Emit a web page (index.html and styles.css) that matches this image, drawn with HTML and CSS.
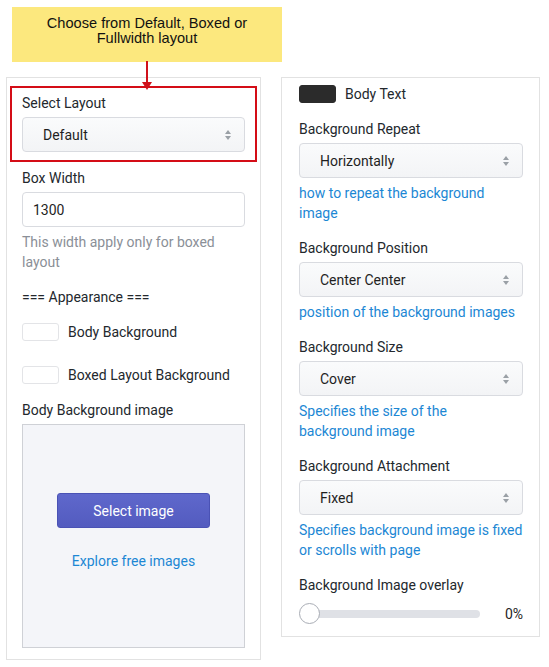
FILE: index.html
```html
<!DOCTYPE html>
<html lang="en">
<head>
<meta charset="utf-8">
<title>Layout settings</title>
<link rel="stylesheet" href="styles.css">
</head>
<body>
<div class="page">
  <div class="callout">Choose from Default, Boxed or<br>Fullwidth layout</div>
  <div class="arrow" aria-hidden="true">
    <svg width="12" height="30" viewBox="0 0 12 30"><rect x="5" y="0" width="2" height="22" fill="#d0111b"/><polygon points="1,21 11,21 6,29" fill="#d0111b"/></svg>
  </div>
  <div class="columns">
    <section class="panel panel-left">
      <div class="highlight">
        <div class="label">Select Layout</div>
        <div class="select"><span>Default</span><svg class="updown" width="8" height="12" viewBox="0 0 8 12"><polygon points="4,1 7,5 1,5" fill="#9aa0a6"/><polygon points="1,7 7,7 4,11" fill="#9aa0a6"/></svg></div>
      </div>
      <div class="label mt6">Box Width</div>
      <div class="input">1300</div>
      <div class="help gray">This width apply only for boxed layout</div>
      <div class="label mt15">=== Appearance ===</div>
      <div class="color-row mt15"><span class="swatch"></span><span>Body Background</span></div>
      <div class="color-row mt23"><span class="swatch"></span><span>Boxed Layout Background</span></div>
      <div class="label mt15">Body Background image</div>
      <div class="image-box">
        <button class="btn" type="button">Select image</button>
        <a class="explore" href="#">Explore free images</a>
      </div>
    </section>
    <section class="panel panel-right">
      <div class="color-row"><span class="swatch dark"></span><span>Body Text</span></div>
      <div class="label mt15">Background Repeat</div>
      <div class="select"><span>Horizontally</span><svg class="updown" width="8" height="12" viewBox="0 0 8 12"><polygon points="4,1 7,5 1,5" fill="#9aa0a6"/><polygon points="1,7 7,7 4,11" fill="#9aa0a6"/></svg></div>
      <div class="help blue">how to repeat the background image</div>
      <div class="label mt15">Background Position</div>
      <div class="select"><span>Center Center</span><svg class="updown" width="8" height="12" viewBox="0 0 8 12"><polygon points="4,1 7,5 1,5" fill="#9aa0a6"/><polygon points="1,7 7,7 4,11" fill="#9aa0a6"/></svg></div>
      <div class="help blue">position of the background images</div>
      <div class="label mt15">Background Size</div>
      <div class="select"><span>Cover</span><svg class="updown" width="8" height="12" viewBox="0 0 8 12"><polygon points="4,1 7,5 1,5" fill="#9aa0a6"/><polygon points="1,7 7,7 4,11" fill="#9aa0a6"/></svg></div>
      <div class="help blue">Specifies the size of the<br>background image</div>
      <div class="label mt15">Background Attachment</div>
      <div class="select"><span>Fixed</span><svg class="updown" width="8" height="12" viewBox="0 0 8 12"><polygon points="4,1 7,5 1,5" fill="#9aa0a6"/><polygon points="1,7 7,7 4,11" fill="#9aa0a6"/></svg></div>
      <div class="help blue">Specifies background image is fixed or scrolls with page</div>
      <div class="label mt15">Background Image overlay</div>
      <div class="slider-row">
        <div class="track"><span class="thumb"></span></div>
        <span class="value">0%</span>
      </div>
    </section>
  </div>
</div>
</body>
</html>
```

FILE: styles.css
```css
* { box-sizing: border-box; }
html, body { margin: 0; padding: 0; background: #fff; }
body {
  font-family: Roboto, "Noto Sans", Arial, sans-serif;
  font-size: 14px;
  line-height: 20px;
  color: #23282d;
}
.page {
  position: relative;
  padding: 7px 0 0 6px;
  width: 549px;
  height: 667px;
}
.callout {
  margin-left: 6px;
  width: 270px;
  height: 55px;
  background: #fce87e;
  font-family: "Liberation Sans", Arial, sans-serif;
  font-size: 14.6px;
  line-height: 15px;
  color: #111;
  text-align: center;
  padding-top: 9px;
}
.arrow {
  position: absolute;
  left: 141px;
  top: 61px;
  z-index: 2;
  line-height: 0;
}
.columns {
  display: flex;
  align-items: flex-start;
  gap: 20px;
  margin-top: 15px;
}
.panel {
  border: 1px solid #e2e2e2;
  background: #fff;
}
.panel-left {
  width: 255px;
  padding: 8px 15px 11px 15px;
}
.panel-right {
  width: 259px;
  padding: 6px 16px 12px 17px;
}
.highlight {
  margin: 0 -12px;
  border: 2px solid #d40d17;
  padding: 5px 10px 8px 10px;
}
.label { height: 20px; }
.mt6 { margin-top: 6px; }
.mt15 { margin-top: 15px; }
.mt23 { margin-top: 23px; }
.select {
  margin-top: 4px;
  height: 35px;
  border: 1px solid #d9dbe0;
  border-radius: 4px;
  background: linear-gradient(#fafbfc, #f3f4f6);
  display: flex;
  align-items: center;
  justify-content: space-between;
  padding: 0 12px 0 20px;
  color: #1f1f1f;
}
.updown { display: block; }
.input {
  margin-top: 4px;
  height: 35px;
  border: 1px solid #d9dbe0;
  border-radius: 4px;
  background: #fff;
  display: flex;
  align-items: center;
  padding: 0 10px;
  color: #1f1f1f;
}
.help { margin-top: 5px; }
.gray { color: #8a8f97; }
.blue { color: #1c87d4; }
.color-row {
  display: flex;
  align-items: center;
  height: 20px;
  gap: 9px;
}
.swatch {
  width: 37px;
  height: 18px;
  border: 1px solid #e3e4e7;
  border-radius: 3px;
  background: #fff;
  flex: none;
}
.swatch.dark {
  background: #2b2b2b;
  border-color: #2b2b2b;
}
.image-box {
  margin-top: 4px;
  height: 224px;
  border: 1px solid #cfd1d6;
  background: #f4f5f9;
  display: flex;
  flex-direction: column;
  align-items: center;
  padding-top: 68px;
}
.btn {
  width: 153px;
  height: 35px;
  border: 1px solid #4a52b5;
  border-radius: 3px;
  background: linear-gradient(#5f68cc, #535bbf);
  color: #fff;
  font-family: Roboto, "Noto Sans", Arial, sans-serif;
  font-size: 14px;
  padding: 0;
}
.explore {
  margin-top: 23px;
  color: #1c87d4;
  text-decoration: none;
}
.slider-row {
  margin-top: 8px;
  height: 21px;
  display: flex;
  align-items: center;
}
.track {
  position: relative;
  flex: 1;
  height: 8px;
  margin-right: 17px;
  margin-left: 1px;
  border-radius: 4px;
  background: #dfe1e6;
}
.thumb {
  position: absolute;
  left: -1px;
  top: -7px;
  width: 21px;
  height: 21px;
  border-radius: 50%;
  background: #fff;
  border: 1px solid #a9adb5;
}
.value {
  width: 26px;
  text-align: right;
  color: #1f1f1f;
}
```
